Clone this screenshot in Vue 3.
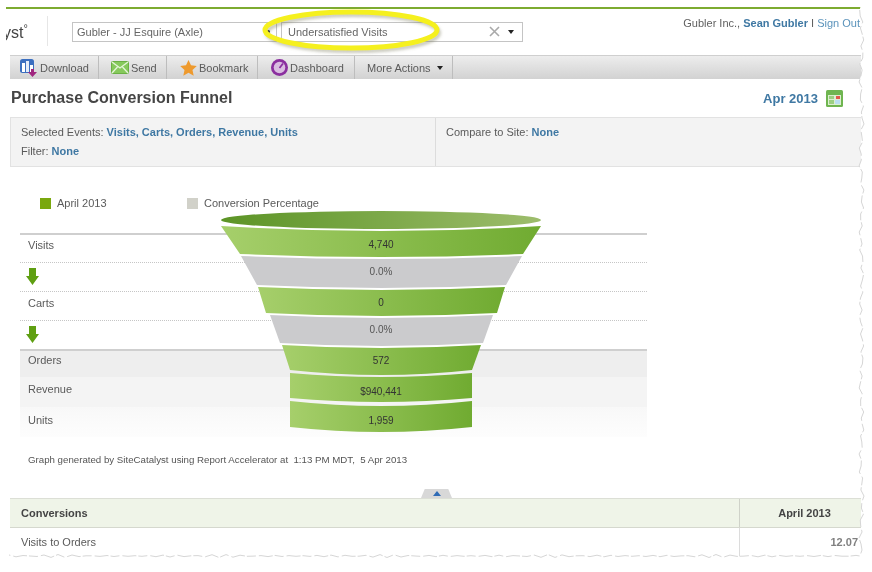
<template>
  <div class="page">
    <div class="top-line"></div>

    <header class="header">
      <div class="logo">yst<sup>°</sup></div>
      <div class="select site-select">
        <span>Gubler - JJ Esquire (Axle)</span>
        <i class="dot"></i>
      </div>
      <div class="select segment-select">
        <span>Undersatisfied Visits</span>
        <svg class="clear" width="11" height="11" viewBox="0 0 11 11">
          <path d="M1 1l9 9M10 1l-9 9" stroke="#a9a9a9" stroke-width="1.6" fill="none" />
        </svg>
        <i class="caret"></i>
      </div>
      <div class="user">
        Gubler Inc., <b>Sean Gubler</b> <span class="pipe">I</span> <a>Sign Out</a>
      </div>
    </header>

    <nav class="toolbar">
      <div class="tool tool-download">
        <svg width="17" height="18" viewBox="0 0 17 18">
          <rect x="0" y="0" width="14" height="14" rx="2.500" fill="#3b6fc0" />
          <rect x="2" y="4" width="3" height="9" fill="#fff" />
          <rect x="6" y="2" width="3" height="11" fill="#e4ecf9" />
          <rect x="10" y="6" width="3" height="7" fill="#fff" />
          <path d="M11 10h3v3h3l-4.500 5-4.500-5h3z" fill="#a0267f" />
        </svg>
        Download
      </div>
      <div class="tool tool-send">
        <svg width="18" height="13" viewBox="0 0 18 13">
          <rect x="0.500" y="0.500" width="17" height="12" rx="1" fill="#86c95c" stroke="#6bb044" />
          <path d="M1 1l8 6 8-6M1 12l5.500-6M17 12l-5.500-6" stroke="#e6f5da" stroke-width="1.300" fill="none" />
        </svg>
        Send
      </div>
      <div class="tool tool-bookmark">
        <svg width="17" height="16" viewBox="0 0 17 16">
          <path d="M8.500 0l2.500 5.300 5.800.7-4.300 3.900 1.200 5.800-5.200-2.900-5.200 2.900 1.200-5.800L.2 6l5.800-.7z" fill="#ee9a2e" />
        </svg>
        Bookmark
      </div>
      <div class="tool tool-dashboard">
        <svg width="17" height="17" viewBox="0 0 17 17">
          <circle cx="8.500" cy="8.500" r="8.500" fill="#8b2f9f" />
          <circle cx="8.500" cy="8.500" r="5.800" fill="#d9bde0" />
          <path d="M8.500 9l3.500-4.500" stroke="#8b2f9f" stroke-width="1.800" />
        </svg>
        Dashboard
      </div>
      <div class="tool tool-more">More Actions <i class="caret"></i></div>
    </nav>

    <div class="title-row">
      <h1>Purchase Conversion Funnel</h1>
      <div class="period">
        Apr 2013
        <svg width="17" height="17" viewBox="0 0 17 17">
          <rect width="17" height="17" rx="1.500" fill="#6fb550" />
          <rect x="2" y="5" width="13" height="10" fill="#dcefd0" />
          <rect x="3" y="10" width="5" height="4" fill="#9ccf82" />
          <rect x="9" y="10" width="5" height="4" fill="#b9ddf0" />
          <rect x="3" y="6" width="5" height="3" fill="#9ccf82" />
          <rect x="10" y="6" width="4" height="3" fill="#e2574c" />
        </svg>
      </div>
    </div>

    <section class="filters">
      <div class="filters-left">
        <p>Selected Events: <b>Visits, Carts, Orders, Revenue, Units</b></p>
        <p>Filter: <b>None</b></p>
      </div>
      <div class="filters-right">
        <p>Compare to Site: <b>None</b></p>
      </div>
    </section>

    <section class="chart">
      <div class="legend">
        <span class="key key-green"></span><span class="key-label first">April 2013</span>
        <span class="key key-grey"></span><span class="key-label">Conversion Percentage</span>
      </div>

      <div class="rows">
        <div v-for="row in rows" :key="row.cls" class="row" :class="row.cls">
          <span v-if="row.label">{{ row.label }}</span>
          <svg v-else width="13" height="17" viewBox="0 0 13 17">
            <path d="M3 0h7v8h3l-6.500 9-6.500-9h3z" fill="#5f9f12" />
          </svg>
        </div>
      </div>

      <svg class="funnel" width="360" height="235" viewBox="200 207 360 235">
        <defs>
          <linearGradient id="bandGreen">
            <stop offset="0" stop-color="#a6cf6b" />
            <stop offset="1" stop-color="#70ab31" />
          </linearGradient>
          <linearGradient id="mouth">
            <stop offset="0" stop-color="#5c9426" />
            <stop offset="1" stop-color="#9dbd6c" />
          </linearGradient>
        </defs>
        <ellipse cx="381" cy="220" rx="160" ry="9" fill="url(#mouth)" />
        <path
          v-for="(band, i) in bands"
          :key="i"
          :d="bandPath(band)"
          :fill="band.grey ? '#cbcbcd' : 'url(#bandGreen)'"
        />
        <text v-for="v in values" :key="v.text" x="381" :y="v.y" text-anchor="middle" class="value" :class="{ dim: v.dim }">
          {{ v.text }}
        </text>
      </svg>

      <p class="generated">Graph generated by SiteCatalyst using Report Accelerator at&nbsp; 1:13 PM MDT,&nbsp; 5 Apr 2013</p>
    </section>

    <div class="handle-row">
      <div class="handle"><i></i></div>
    </div>

    <table class="data">
      <thead>
        <tr>
          <th class="name">Conversions</th>
          <th class="month">April 2013</th>
        </tr>
      </thead>
      <tbody>
        <tr>
          <td class="name">Visits to Orders</td>
          <td class="num">12.07</td>
        </tr>
      </tbody>
    </table>

    <!-- yellow marker somebody drew on the screenshot -->
    <svg class="marker" width="194" height="56" viewBox="0 0 194 56">
      <defs>
        <filter id="markerShadow" x="-10%" y="-30%" width="120%" height="160%">
          <feGaussianBlur stdDeviation="1.5" />
        </filter>
      </defs>
      <ellipse cx="97" cy="28" rx="86" ry="18" fill="none" stroke="#77775a" stroke-opacity="0.4" stroke-width="4" filter="url(#markerShadow)" />
      <ellipse cx="95" cy="25" rx="86" ry="18" fill="none" stroke="#f5f01e" stroke-width="5" />
    </svg>

    <!-- torn paper edge -->
    <svg class="torn" width="872" height="572" viewBox="0 0 872 572">
      <path :d="tornOutside" fill="#fff" />
      <path :d="tornLine" fill="none" stroke="#d6d6d6" stroke-width="1" stroke-dasharray="14 3 9 2" />
    </svg>
  </div>
</template>

<script setup>
const rows = [
  { label: 'Visits', cls: 'r-visits' },
  { label: '', cls: 'r-arrow1' },
  { label: 'Carts', cls: 'r-carts' },
  { label: '', cls: 'r-arrow2' },
  { label: 'Orders', cls: 'r-orders' },
  { label: 'Revenue', cls: 'r-revenue' },
  { label: 'Units', cls: 'r-units' }
]

// each band: top edge x/y + middle y, then the same for the bottom edge
const bands = [
  { l1: 221, r1: 541, y1: 226, m1: 231, l2: 240, r2: 523, y2: 254, m2: 257 },
  { l1: 241, r1: 522, y1: 256, m1: 259, l2: 257, r2: 506, y2: 285, m2: 288, grey: true },
  { l1: 258, r1: 505, y1: 287, m1: 290, l2: 266, r2: 497, y2: 313, m2: 316 },
  { l1: 270, r1: 493, y1: 315, m1: 318, l2: 280, r2: 483, y2: 343, m2: 346, grey: true },
  { l1: 282, r1: 481, y1: 345, m1: 348, l2: 290, r2: 472, y2: 370, m2: 375 },
  { l1: 290, r1: 472, y1: 373, m1: 377, l2: 290, r2: 472, y2: 398, m2: 402 },
  { l1: 290, r1: 472, y1: 401, m1: 406, l2: 290, r2: 472, y2: 427, m2: 432 }
]

const values = [
  { text: '4,740', y: 248 },
  { text: '0.0%', y: 275, dim: true },
  { text: '0', y: 306 },
  { text: '0.0%', y: 333, dim: true },
  { text: '572', y: 364 },
  { text: '$940,441', y: 395 },
  { text: '1,959', y: 424 }
]

function bandPath(b) {
  const cx = (b.l1 + b.r1) / 2
  const c1 = 2 * b.m1 - b.y1
  const c2 = 2 * b.m2 - b.y2
  return `M${b.l1} ${b.y1}Q${cx} ${c1} ${b.r1} ${b.y1}L${b.r2} ${b.y2}Q${cx} ${c2} ${b.l2} ${b.y2}Z`
}

// wobbly edge, sines so it stays the same on every load
const rightEdge = []
for (let y = 10; y <= 556; y += 6) {
  rightEdge.push([861.5 + 1.6 * Math.sin(y * 0.37) + Math.sin(y * 1.13), y])
}
const bottomEdge = []
for (let x = 856; x >= 8; x -= 7) {
  bottomEdge.push([x, 556 + 0.9 * Math.sin(x * 0.41) + 0.6 * Math.sin(x * 1.27)])
}
const pts = [...rightEdge, ...bottomEdge].map((p) => `${p[0].toFixed(1)} ${p[1].toFixed(1)}`)
const tornLine = 'M' + pts.join('L')
const tornOutside = `M872 0L862 0L${pts.join('L')}L0 556L0 572L872 572Z`
</script>

<style scoped>
.page {
  position: relative;
  width: 872px;
  height: 572px;
  padding-top: 7px;
  box-sizing: border-box;
  overflow: hidden;
  background: #fff;
  font-family: "Liberation Sans", Arial, sans-serif;
  font-size: 11px;
  color: #5a5a5a;
  filter: blur(0.35px);
}

.top-line {
  height: 2px;
  margin-left: 6px;
  width: 855px;
  background: #7dab30;
}

.header {
  display: flex;
  align-items: flex-start;
  height: 46px;
}

.logo {
  width: 41px;
  height: 30px;
  margin: 7px 0 0 6px;
  overflow: hidden;
  border-right: 1px solid #e6e6e6;
  font-size: 16px;
  line-height: 33px;
  text-indent: -3px;
  color: #444;
}

.logo sup {
  font-size: 11px;
  line-height: 0;
}

.select {
  display: flex;
  align-items: center;
  height: 20px;
  margin-top: 13px;
  padding-bottom: 1px;
  border: 1px solid #c4c4c4;
  box-sizing: border-box;
  color: #666;
  background: #fff;
}

.site-select {
  width: 205px;
  margin-left: 24px;
  padding-left: 4px;
}

.site-select span {
  flex: 1;
}

.dot {
  width: 3px;
  height: 3px;
  margin-right: 6px;
  border-radius: 50%;
  background: #222;
}

.segment-select {
  width: 242px;
  margin-left: 4px;
  padding-left: 6px;
}

.segment-select span {
  flex: 1;
}

.clear {
  margin-right: 8px;
}

.caret {
  display: inline-block;
  width: 0;
  height: 0;
  border-left: 3.5px solid transparent;
  border-right: 3.5px solid transparent;
  border-top: 4px solid #222;
}

.segment-select .caret {
  margin-right: 8px;
}

.user {
  margin-left: auto;
  margin-right: 12px;
  padding-top: 8px;
  white-space: nowrap;
  color: #5f5f5f;
}

.user b {
  color: #3f78a3;
}

.user a {
  color: #5b93bb;
}

.toolbar {
  display: flex;
  height: 24px;
  margin-left: 10px;
  width: 851px;
  background: linear-gradient(#ededed, #d2d2d2);
  border-top: 1px solid #cfcfcf;
  box-sizing: border-box;
}

.tool {
  display: flex;
  align-items: center;
  gap: 3px;
  box-sizing: border-box;
  border-right: 1px solid #bdbdbd;
  color: #5a5a5a;
  white-space: nowrap;
}

.tool-download { width: 89px; padding-left: 10px; }
.tool-send { width: 68px; padding-left: 12px; gap: 2px; }
.tool-bookmark { width: 91px; padding-left: 13px; gap: 2px; }
.tool-dashboard { width: 97px; padding-left: 13px; gap: 2px; }
.tool-more { width: 98px; padding-left: 12px; gap: 6px; }

.title-row {
  display: flex;
  align-items: center;
  justify-content: space-between;
  height: 38px;
  margin-left: 11px;
  width: 832px;
}

.title-row h1 {
  margin: 0;
  font-size: 16px;
  font-weight: 700;
  color: #454545;
}

.period {
  display: flex;
  align-items: center;
  gap: 8px;
  font-size: 13px;
  font-weight: 700;
  color: #3f78a3;
}

.filters {
  display: flex;
  height: 50px;
  margin-left: 10px;
  width: 851px;
  box-sizing: border-box;
  background: #f3f3f3;
  border: 1px solid #e2e2e2;
  border-right: 0;
}

.filters p {
  margin: 0 0 6px;
  line-height: 13px;
}

.filters b {
  color: #3f78a3;
}

.filters-left {
  width: 425px;
  padding: 8px 0 0 10px;
  box-sizing: border-box;
  border-right: 1px solid #dcdcdc;
}

.filters-right {
  padding: 8px 0 0 10px;
}

.chart {
  position: relative;
}

.legend {
  display: flex;
  align-items: center;
  height: 14px;
  padding: 29px 0 0 40px;
}

.key {
  width: 11px;
  height: 11px;
  margin-right: 6px;
}

.key-green { background: #7aa80e; }
.key-grey { background: #d1d1c9; }

.key-label.first {
  width: 130px;
}

.rows {
  margin: 23px 0 0 20px;
  width: 627px;
}

.row {
  display: flex;
  align-items: center;
  box-sizing: border-box;
  padding-left: 8px;
}

.r-visits { height: 30px; padding-bottom: 7px; border-top: 2px solid #cfcfcf; border-bottom: 1px dotted #c6c6c6; }
.r-arrow1 { height: 28px; padding: 0 0 2px 6px; }
.r-carts { height: 30px; padding-bottom: 6px; border-top: 1px dotted #c6c6c6; border-bottom: 1px dotted #c6c6c6; }
.r-arrow2 { height: 28px; padding: 0 0 2px 6px; }
.r-orders { height: 28px; padding-bottom: 8px; border-top: 2px solid #cfcfcf; background: #eeeeee; }
.r-revenue { height: 30px; padding-bottom: 6px; background: #f4f4f4; }
.r-units { height: 30px; padding-bottom: 4px; background: linear-gradient(#f8f8f8, #fdfdfd); }

.funnel {
  position: absolute;
  left: 200px;
  top: 40px;
}

.value {
  font-size: 10px;
  fill: #333;
}

.value.dim {
  fill: #555;
}

.generated {
  margin: 17px 0 0 28px;
  font-size: 9.7px;
  line-height: 12px;
  color: #555;
}

.handle-row {
  display: flex;
  height: 9px;
  margin-top: 23px;
  padding-left: 421px;
}

.handle {
  display: flex;
  align-items: center;
  justify-content: center;
  width: 31px;
  height: 9px;
  background: #d8d8d8;
  clip-path: polygon(12% 0, 88% 0, 100% 100%, 0 100%);
}

.handle i {
  width: 0;
  height: 0;
  border-left: 4px solid transparent;
  border-right: 4px solid transparent;
  border-bottom: 5px solid #2f6cb5;
}

.data {
  width: 851px;
  margin-left: 10px;
  border-collapse: collapse;
  table-layout: fixed;
}

.data th {
  height: 28px;
  padding: 0;
  background: #eff4e8;
  border-top: 1px solid #dcdfd6;
  border-bottom: 1px solid #d5d8ce;
  color: #444;
  font-weight: 700;
}

.data td {
  height: 28px;
  padding: 0 0 1px;
}

.data .name {
  text-align: left;
  padding-left: 11px;
}

.data .month {
  width: 113px;
  padding-left: 8px;
  border-left: 1px solid #cfd2c9;
  text-align: center;
}

.num {
  text-align: right;
  border-left: 1px solid #dcdcdc;
  padding-right: 3px !important;
  font-weight: 700;
  color: #808080;
}

.marker {
  position: absolute;
  left: 256px;
  top: 5px;
}

.torn {
  position: absolute;
  left: 0;
  top: 0;
  pointer-events: none;
}
</style>

<style>
html,
body {
  margin: 0;
  background: #fff;
}
</style>
